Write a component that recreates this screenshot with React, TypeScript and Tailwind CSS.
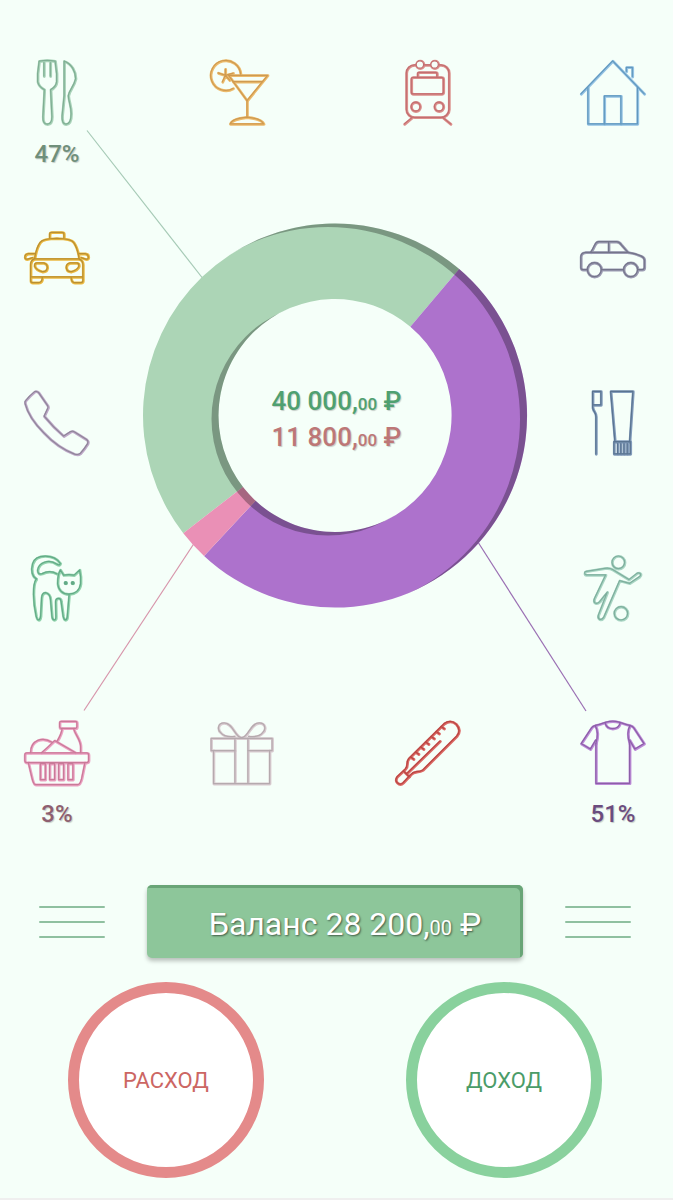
import type { ReactNode } from 'react';

type Category = {
  name: string;
  light: string;
  dark: string;
  shape: ReactNode;
  percent?: string;
  percentClass?: string;
};

const food: Category = {
  name: 'Еда',
  light: '#a9d3b9',
  dark: '#7fae93',
  percent: '47%',
  percentClass: 'text-[#6f8f7b]',
  shape: (
    <>
      <path d="M15.5 1.5Q23.5 0 31.5 1.5L33 14V22Q32.5 27 27 30L28.3 57Q28.3 64.5 23.7 64.5Q19 64.5 19.3 57L20.7 30Q15 27 14 22V14Z" />
      <path d="M20.3 3V16.5M26.7 3V16.5" />
      <path d="M40.5 1.5C48 4 52 12 52 19C50 28 45.5 30 44.7 36C45 42 47.5 46 47.5 54Q47.5 64.5 42.3 64.5Q38 64.5 38.5 56L40.5 36Z" />
    </>
  ),
};

const cafe: Category = {
  name: 'Кафе',
  light: '#ecbb6c',
  dark: '#cf9a50',
  shape: (
    <>
      <path d="M32 14.5A15 15 0 1 0 24.5 28.8" />
      <path d="M16.7 9.5V15.7M9.5 13.3L16.7 15.7L24.5 13.5M16.7 15.7L13.8 22.2M16.7 15.7L21 20.5" />
      <path d="M20 15.7H59L38.4 41Z" />
      <path d="M24.5 22H53.5M38.4 41V57.5" />
      <path d="M21.5 64.3Q23 59 38.4 57.5Q53 59 55 64.3Z" />
    </>
  ),
};

const transport: Category = {
  name: 'Транспорт',
  light: '#dc908c',
  dark: '#c26e70',
  shape: (
    <>
      <rect x="11.7" y="5.3" width="42.6" height="52.4" rx="8" />
      <g fill="#f5fff9">
        <circle cx="25.3" cy="4.9" r="3.7" />
        <circle cx="40" cy="4.9" r="3.7" />
      </g>
      <path d="M23 17.7V14Q23 12.7 24.3 12.7H41Q42.3 12.7 42.3 14V17.7" />
      <rect x="16.7" y="17.7" width="32" height="16.6" rx="2" />
      <circle cx="21" cy="47" r="4.5" />
      <circle cx="44.3" cy="47" r="4.5" />
      <path d="M17.3 58L9.7 64.3M48.3 58L56 64.3" />
    </>
  ),
};

const home: Category = {
  name: 'Дом',
  light: '#93c2e4',
  dark: '#6298bd',
  shape: (
    <>
      <path d="M1.3 34.3L33 1.3L64.7 34.3" />
      <path d="M8.3 28V64.3H57.8V28" />
      <path d="M24.7 64.3V36.3H41.3V64.3" />
      <path d="M46.7 11.7V7.7H52.7V17" />
    </>
  ),
};

const taxi: Category = {
  name: 'Такси',
  light: '#ebb941',
  dark: '#b98f33',
  shape: (
    <>
      <path d="M26 13.5V9.5Q26 7.7 28 7.7H38.3Q40.3 7.7 40.3 9.5V13.5" />
      <path d="M11 34.3C12 27 13.5 22 16.5 17.7Q19 14 33 13.7Q47.5 14 50 17.7C53 22 54.5 27 55.5 34.3Z" />
      <path d="M11 29H4.5Q1 29.5 1.3 33Q1.5 35 4 34.5L9 33M55.5 29H61.5Q65 29.5 64.7 33Q64.5 35 62 34.5L57.5 33" />
      <path d="M10.5 34.3Q7 36 7 40V56Q7 58 9 58H15Q18.5 58 18.7 53M55.5 34.3Q59.3 36 59.3 40V56Q59.3 58 57.3 58H51Q47.7 58 47.5 53M7 52.3H59.3" />
      <path d="M13 38.3H20Q23.7 39 23.7 43Q23 47.3 18.5 47Q12.5 45.5 11 41.5Q10.8 38.5 13 38.3Z" />
      <path d="M53.3 38.3H46.3Q42.6 39 42.6 43Q43.3 47.3 47.8 47Q53.8 45.5 55.3 41.5Q55.5 38.5 53.3 38.3Z" />
    </>
  ),
};

const car: Category = {
  name: 'Машина',
  light: '#9c9cb3',
  dark: '#74758a',
  shape: (
    <>
      <path d="M7.5 45H3.5Q1.2 45 1.2 42.7V32Q1.5 28 6 27.7H48.3Q55 28.5 61.7 31.5Q64.7 33 64.7 35.5V42.7Q64.7 45 62.5 45H58.3M22 45H43.7" />
      <circle cx="14.7" cy="45" r="7" />
      <circle cx="51" cy="45" r="7" />
      <path d="M11 27.7Q13 25 15 20.5Q16.5 17 19 17H37Q39.5 17 42 20.5L48.3 27.7M29 17V27.7" />
    </>
  ),
};

const phone: Category = {
  name: 'Связь',
  light: '#bfa9c9',
  dark: '#8f8699',
  shape: (
    <path d="M2 11Q6 6 11 2Q13 1 15 3L24 16Q25 18 24 19L20.5 26.5Q29 37 40 46.5L47 42Q49 41 51 42.5L63 50Q65 51.5 64 54Q61 59 56.5 64Q54.5 65.5 51 64.5Q34 58 20 43Q5 28 1.5 14Q1 12 2 11Z" />
  ),
};

const hygiene: Category = {
  name: 'Гигиена',
  light: '#829cbb',
  dark: '#5a7491',
  shape: (
    <>
      <path d="M13 15.3V1.7H21.3V15.3H13V18Q13.3 20 15 22.5Q16.3 24.5 16.3 27V64.3" />
      <path d="M31 1.7H53.3L50 52H35.3Z" />
      <path d="M34.3 52H50.7V64.3H34.3Z" />
      <path d="M38 54V64M41.2 54V64M44.4 54V64M47.6 54V64" />
    </>
  ),
};

const pets: Category = {
  name: 'Питомцы',
  light: '#93d4ae',
  dark: '#63aa87',
  shape: (
    <>
      <path d="M33.5 19.3Q26 15 18.5 19Q14 20.5 14 15.5C15 8 25 4 33 9.5Q36 11.5 36.7 8.7C30 -1 12 -1 9 9C7 16 8.5 22 12.7 24.3" />
      <path d="M12.7 24.3C8.5 30 9.5 48 12.5 61.5Q13.5 65.3 15 65.3Q16.5 65.3 17 61.5L18 43Q18.5 38 22 38Q26.5 39 26.9 45L28.3 61.5Q28.7 65.3 30.5 65.3Q32.5 65.3 32.3 61.5L32 47Q32 43.7 35 43.7Q37.3 43.7 37.5 47L39.5 61.5Q40.3 65.3 41.7 65.3Q43.5 65.3 43.7 61.5L45.5 40" />
      <path d="M36.7 15.3L40 20.5Q45 19.5 50.5 20.5L56 15.3Q57.5 22 57 29C56 36 51 39.5 45 39.5C38.5 39.5 34.5 35 34 29Q34 20 36.7 15.3Z" />
      <g fill="currentColor" stroke="none">
        <circle cx="42" cy="28.3" r="2" />
        <circle cx="49" cy="28.3" r="2" />
      </g>
    </>
  ),
};

const sport: Category = {
  name: 'Спорт',
  light: '#a9d6c4',
  dark: '#7eae9d',
  shape: (
    <>
      <circle cx="38.7" cy="7.7" r="6.3" />
      <circle cx="41.3" cy="58.7" r="6.7" />
      <path d="M6.5 16.7L25 13.7Q30 13 33 15L49.3 25L57.5 18.5Q60 17.5 61 19.5Q61.3 21 60 22L50 28.7L40 26L24 62.8Q22.5 65.3 20 64.7Q17.8 63.5 18.7 60.5L27.7 37.5L20 47Q17.5 49.5 15.5 48.3Q13.5 47 14.8 44L26 20.3H6.7Q4.8 20 5 18.3Q5 17 6.5 16.7Z" />
    </>
  ),
};

const groceries: Category = {
  name: 'Продукты',
  light: '#eca3c3',
  dark: '#c97a98',
  percent: '3%',
  percentClass: 'text-[#8e5f70]',
  shape: (
    <>
      <rect x="36" y="1.7" width="17.3" height="7" rx="1.5" />
      <path d="M38.5 9Q38 14 33.5 21.5M50 9C52 16 57 20 57 27V33" />
      <path d="M7 33C7 20 19 17 28 22.5M18 33Q24 28 31 21L51.7 33" />
      <rect x="1.2" y="33.3" width="63.8" height="9.7" rx="2" />
      <path d="M4.7 43L8.5 59Q10 65 12 65H54Q56.5 65 58 59L61.3 43" />
      <path d="M16.7 44H21.7V60H16.7ZM26 44H31V60H26ZM35 44H40V60H35ZM44.3 44H49.3V60H44.3Z" />
    </>
  ),
};

const gifts: Category = {
  name: 'Подарки',
  light: '#d9cbd0',
  dark: '#b5aaae',
  shape: (
    <>
      <path d="M2.5 18.7H63.5V31H39.3M26.3 31H2.5V18.7" />
      <path d="M4.9 31V64H61V31M26.3 18.7V64M39.3 18.7V64" />
      <path d="M33 18C26 18 25 3.5 15.5 3.3C9 3.3 8.5 10 12 13Q16 18 26 16.8M33 18C40 18 41 3.5 50.5 3.3C57 3.3 57.5 10 54 13Q50 18 40 16.8" />
    </>
  ),
};

const health: Category = {
  name: 'Здоровье',
  light: '#dd6a66',
  dark: '#b84643',
  shape: (
    <>
      <path d="M14 39L49.5 4Q56 -.5 61.5 4.5Q67 10.5 62 16.5L28 50.5Q26 52 22 52Q18 52.5 16 55L8.5 63Q5.5 66 2.5 63Q0 60.5 2.5 57L10.5 49.5Q12.5 47.5 12.5 44Q12.5 41 14 39Z" />
      <path d="M45.3 21.5L12 54M9 51.5L14.5 57" />
      <path d="M16 37.5L19 39.5M21 32.5L24 34.5M26 27.5L29 29.5M31 22.5L34 24.5M36.5 17L39.5 19M41.5 12L44.5 14M46.5 7L49.5 9" />
    </>
  ),
};

const clothes: Category = {
  name: 'Одежда',
  light: '#bd8cd8',
  dark: '#8c5fa8',
  percent: '51%',
  percentClass: 'text-[#6b4c7f]',
  shape: (
    <>
      <path d="M16.3 24V63.7H50V24" />
      <path d="M16 20.5L10.7 29.5L1.5 24L12 8Q13 6.5 16 5.7Q24 3.5 26.5 2.5Q33 .7 39.5 2.5Q42 3.5 50 5.7Q53 6.5 54 8L64.5 24L55.3 29.5L50 20.5" />
      <path d="M15.7 6Q19.5 13 16.3 24M50.3 6Q46.5 13 50 24" />
      <path d="M25.5 3.5Q27 9 33 9Q39 9 40.5 3.5" />
    </>
  ),
};

const rows = [
  [food, cafe, transport, home],
  [taxi, car],
  [phone, hygiene],
  [pets, sport],
  [groceries, gifts, health, clothes],
];

// donut geometry, angles in degrees clockwise from the top
const CX = 335;
const CY = 415.5;
const OUTER = 192;
const INNER = 116.5;

const slices = [
  { color: '#acd5b6', from: 232.2, to: 400.3 },
  { color: '#ad72cc', from: 40.3, to: 223 },
  { color: '#ea90b6', from: 223, to: 232.2 },
];

function point(r: number, deg: number) {
  const a = (deg * Math.PI) / 180;
  return `${(CX + r * Math.sin(a)).toFixed(2)} ${(CY - r * Math.cos(a)).toFixed(2)}`;
}

function slicePath(from: number, to: number) {
  const large = to - from > 180 ? 1 : 0;
  return `M${point(OUTER, from)}A${OUTER} ${OUTER} 0 ${large} 1 ${point(OUTER, to)}L${point(INNER, to)}A${INNER} ${INNER} 0 ${large} 0 ${point(INNER, from)}Z`;
}

function circlePath(cx: number, cy: number, r: number) {
  return `M${cx - r} ${cy}a${r} ${r} 0 1 0 ${2 * r} 0a${r} ${r} 0 1 0 ${-2 * r} 0Z`;
}

function Chart() {
  return (
    <svg viewBox="0 0 673 885" className="[grid-area:1/1] w-full h-full" aria-hidden="true">
      <defs>
        <clipPath id="ring">
          <path clipRule="evenodd" d={circlePath(CX, CY, OUTER) + circlePath(CX, CY, INNER)} />
        </clipPath>
      </defs>
      <path d="M87 130.5L204 280" stroke="#a6cab6" strokeWidth="1.2" />
      <path d="M84 710.5L195 542" stroke="#d795ab" strokeWidth="1.2" />
      <path d="M476 539L586 711" stroke="#9a6fb3" strokeWidth="1.2" />
      {slices.map((s) => (
        <path key={s.color} d={slicePath(s.from, s.to)} fill={s.color} />
      ))}
      {/* shaded edge that gives the ring its thickness */}
      <path
        clipPath="url(#ring)"
        fillRule="evenodd"
        fill="#000"
        fillOpacity="0.29"
        d={'M0 0H673V885H0Z' + circlePath(CX - 7, CY + 3.6, OUTER) + circlePath(CX - 7, CY + 3.6, INNER)}
      />
    </svg>
  );
}

function CategoryButton({ category }: { category: Category }) {
  const { name, light, dark, shape, percent, percentClass } = category;
  return (
    <button type="button" aria-label={name} className="w-[66px] flex flex-col items-center cursor-pointer">
      <svg viewBox="0 0 66 66" className="w-[66px] h-[66px] overflow-visible" fill="none" strokeLinecap="round" strokeLinejoin="round">
        <g stroke={light} color={light} strokeWidth="2.8">{shape}</g>
        <g stroke={dark} color={dark} strokeWidth="1.2" transform="translate(-.4 -.4)">{shape}</g>
      </svg>
      {percent && (
        <span className={`mt-3.5 text-2xl leading-7 font-medium [text-shadow:1px_1px_1px_rgba(0,0,0,0.2)] ${percentClass}`}>
          {percent}
        </span>
      )}
    </button>
  );
}

function Amount({ value, className }: { value: string; className: string }) {
  return (
    <p className={`text-[26px] leading-9 font-medium whitespace-nowrap [text-shadow:1px_1px_1px_rgba(0,0,0,0.2)] ${className}`}>
      {value},<span className="text-[17px] leading-none">00</span> ₽
    </p>
  );
}

function MenuButton({ label }: { label: string }) {
  return (
    <button type="button" aria-label={label} className="w-[66px] shrink-0 flex flex-col gap-[13px] cursor-pointer">
      <span className="h-[2px] w-full rounded-full bg-[#8fc0a0]" />
      <span className="h-[2px] w-full rounded-full bg-[#8fc0a0]" />
      <span className="h-[2px] w-full rounded-full bg-[#8fc0a0]" />
    </button>
  );
}

export default function App() {
  return (
    <main className="min-h-screen bg-[#f5fff9] border-b-2 border-[#efefef] pb-5 font-[Roboto,'Noto_Sans',sans-serif]">
      <div className="max-w-3xl mx-auto">
        <section className="grid">
          <Chart />

          <div className="[grid-area:1/1] flex flex-col items-center justify-center pb-12">
            <Amount value="40 000" className="text-[#4fa070]" />
            <Amount value="11 800" className="text-[#bd7777]" />
          </div>

          <div className="[grid-area:1/1] pt-[60px] pl-6 pr-[27px]">
            {rows.map((row, i) => (
              <div key={i} className="h-[165px] flex items-start justify-between">
                {row.map((category) => (
                  <CategoryButton key={category.name} category={category} />
                ))}
              </div>
            ))}
          </div>
        </section>

        <div className="flex items-center gap-[42px] pl-[39px] pr-[42px]">
          <MenuButton label="Меню" />
          <button
            type="button"
            className="flex-1 h-[73px] pl-5 pt-1 rounded-[5px] bg-[#8dc69a] text-[32px] leading-10 text-white whitespace-nowrap cursor-pointer shadow-[inset_-3px_3px_0_#69a577,0_3px_4px_rgba(0,0,0,0.25)] [text-shadow:1px_1px_2px_rgba(0,0,0,0.55)]"
          >
            Баланс 28 200,<span className="text-xl leading-none">00</span> ₽
          </button>
          <MenuButton label="Операции" />
        </div>

        <div className="mt-6 flex justify-between pl-[68px] pr-[71px]">
          <button
            type="button"
            className="w-[196px] h-[196px] rounded-full border-[11px] border-[#e48a8a] bg-white text-[22px] text-[#cc6663] cursor-pointer"
          >
            РАСХОД
          </button>
          <button
            type="button"
            className="w-[196px] h-[196px] rounded-full border-[11px] border-[#89d19d] bg-white text-[22px] text-[#4b9c68] cursor-pointer"
          >
            ДОХОД
          </button>
        </div>
      </div>
    </main>
  );
}
